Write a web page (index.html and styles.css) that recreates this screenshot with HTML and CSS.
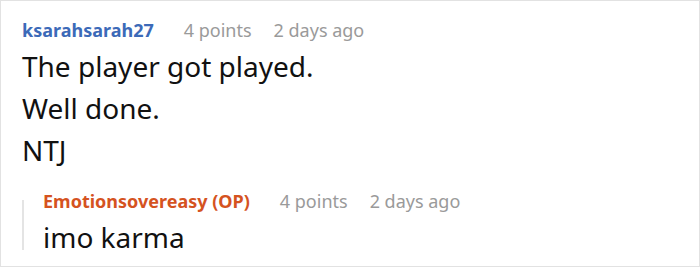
FILE: index.html
```html
<!DOCTYPE html>
<html>
<head>
<meta charset="utf-8">
<link rel="stylesheet" href="styles.css">
</head>
<body>
<div class="comment">
  <div class="meta">
    <span class="user">ksarahsarah27</span>
    <span class="info">4 points</span>
    <span class="info">2 days ago</span>
  </div>
  <div class="text">
    <p>The player got played.</p>
    <p>Well done.</p>
    <p>NTJ</p>
  </div>
  <div class="reply">
    <div class="bar"></div>
    <div class="reply-body">
      <div class="meta">
        <span class="user op">Emotionsovereasy (OP)</span>
        <span class="info">4 points</span>
        <span class="info">2 days ago</span>
      </div>
      <div class="text reply-text">
        <p>imo karma</p>
      </div>
    </div>
  </div>
</div>
</body>
</html>
```
FILE: styles.css
```css
html, body {
  margin: 0;
  padding: 0;
  background: #fff;
}
.comment {
  box-sizing: border-box;
  width: 700px;
  height: 267px;
  border: 1px solid #e2e2e2;
  padding: 17px 21px 0;
  font-family: "Noto Sans", sans-serif;
}
.meta {
  display: flex;
  gap: 22px;
  font-size: 18px;
  line-height: 24px;
  align-items: baseline;
}
.user {
  font-weight: 700;
  color: #3c6ab8;
  margin-right: 8px;
}
.user.op {
  color: #d5531f;
}
.info {
  color: #9a9a9a;
}
.text {
  margin-top: 3px;
}
.text p {
  margin: 0;
  font-size: 28px;
  line-height: 42px;
  color: #111;
}
.reply {
  display: flex;
  margin-top: 18px;
}
.bar {
  width: 2px;
  background: #e4e4e4;
  margin: 11px 0 8px;
}
.reply-body {
  padding-left: 19px;
}
.reply-text {
  margin-top: 3px;
}
```
